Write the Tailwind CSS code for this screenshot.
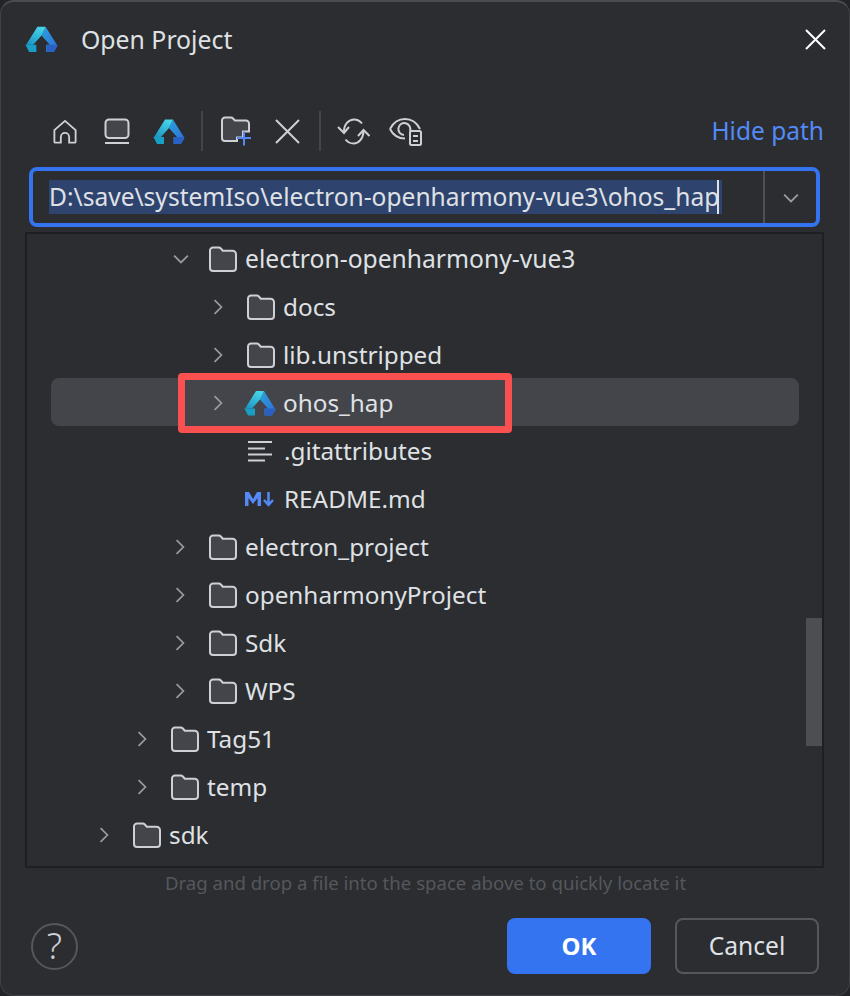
<!doctype html>
<html><head><meta charset="utf-8"><script src="https://cdn.jsdelivr.net/npm/@tailwindcss/browser@4"></script></head>
<body class="m-0 bg-[#232427]">
<svg width="0" height="0" class="absolute">
<defs>
<linearGradient id="g2" x1="0.7" y1="0" x2="0.2" y2="1"><stop offset="0" stop-color="#46d6e8"/><stop offset="1" stop-color="#1c94c4"/></linearGradient>
<linearGradient id="g3" x1="0" y1="0" x2="1" y2="1"><stop offset="0" stop-color="#2aa3dc"/><stop offset="1" stop-color="#2f6bd6"/></linearGradient>
<symbol id="logo" viewBox="0 0 32 26">
<path d="M20 1L31.500 19.500 28 25.500H20.500V18.500H24L16 9.500z" fill="url(#g3)"/>
<path d="M12 1H20L16 9.500 8 18.500H.5L.5 19.500z" fill="url(#g2)"/>
<path d="M.5 18.500H11V25.500H4z" fill="#1b9ec6"/>
<path d="M21 18.500H31L28 25.500H21z" fill="#2a5fc4"/>
</symbol>
<symbol id="folder" viewBox="0 0 28 26">
<path d="M1 4.500A3 3 0 0 1 4 1.500h5.800c.9 0 1.500.4 2.100 1l1.900 2.200h9.700a3.500 3.500 0 0 1 3.500 3.500v13.800a3 3 0 0 1-3 3H4a3 3 0 0 1-3-3z" fill="#43454a" stroke="#ced0d6" stroke-width="2"/>
</symbol>
<symbol id="right" viewBox="0 0 14 20"><path d="M3 2l8 8-8 8" fill="none" stroke="#9a9ca2" stroke-width="2"/></symbol>
<symbol id="down" viewBox="0 0 20 14"><path d="M2 3l8 8 8-8" fill="none" stroke="#9a9ca2" stroke-width="2"/></symbol>
</defs>
</svg>

<div class="relative w-[850px] h-[996px] box-border overflow-hidden rounded-[14px] border border-[#3f4146] border-t-[2px] border-t-[#4b4c50] bg-[#2b2d30] font-['Noto_Sans','Open_Sans',sans-serif] text-[#dfe1e5] flex flex-col">

  <!-- title -->
  <div class="flex items-center h-[74px] pl-[24px] pr-[23px] shrink-0">
    <svg class="w-[33px] h-[28px]"><use href="#logo"/></svg>
    <span class="ml-[23px] text-[24.8px] leading-none">Open Project</span>
    <svg class="ml-auto w-[21px] h-[21px]" viewBox="0 0 21 21"><path d="M1 1l19 19M20 1L1 20" stroke="#fff" stroke-width="2" fill="none"/></svg>
  </div>

  <!-- toolbar -->
  <div class="flex items-center h-[44px] mt-[33px] pl-[51px] pr-[25px] shrink-0">
    <svg class="ml-[1px] w-[24px] h-[25px]" viewBox="0 0 26 26" fill="none" stroke="#ced0d6" stroke-width="2"><path d="M1.500 11.500L13 1.500l11.500 10V24a1 1 0 0 1-1 1H17.500v-6a4.500 4.500 0 0 0-9 0v6H2.500a1 1 0 0 1-1-1z"/></svg>
    <svg class="ml-[27px] w-[26px] h-[26px]" viewBox="0 0 26 26" fill="none" stroke="#ced0d6" stroke-width="2"><rect x="1.500" y="1.500" width="23" height="18.500" rx="3.500" fill="#43454a"/><path d="M1 25h24"/></svg>
    <svg class="ml-[23px] w-[32px] h-[27px]"><use href="#logo"/></svg>
    <div class="ml-[16px] w-[2px] h-[40px] bg-[#43454a]"></div>
    <svg class="ml-[18px] w-[31px] h-[30px]" viewBox="0 0 31 30" fill="none"><path d="M1 4.500A3 3 0 0 1 4 1.500h6c.8 0 1.500.3 2 1l2 2h11a3 3 0 0 1 3 3v8H22v6h-6v3.500H4a3 3 0 0 1-3-3z" fill="#43454a" stroke="#ced0d6" stroke-width="2"/><path d="M16 22h14M23 15.500v14" stroke="#548af7" stroke-width="2"/></svg>
    <svg class="ml-[23px] w-[25px] h-[25px]" viewBox="0 0 25 25" fill="none"><path d="M1 1l23 23M24 1L1 24" stroke="#ced0d6" stroke-width="2"/></svg>
    <div class="ml-[19px] w-[2px] h-[40px] bg-[#43454a]"></div>
    <svg class="ml-[16px] w-[33px] h-[27px]" viewBox="0 0 33 27" fill="none" stroke="#ced0d6" stroke-width="2"><path d="M7 13.500C7 6 12 1.500 17 1.500c3.500 0 6 1.500 8 4"/><path d="M1 9l6 6 5-6"/><path d="M26.500 13c0 7.500-5 12.500-10 12.500-3.500 0-6-1.500-8-4"/><path d="M21 18l5.500-6 6 6"/></svg>
    <svg class="ml-[19px] w-[33px] h-[29px]" viewBox="0 0 33 29" fill="none" stroke="#ced0d6" stroke-width="2"><path d="M1 12C4 6 9 2 16 2s12 4 15 10M1 12c3 6 8 9.500 15 9.500"/><path d="M21 14a6 6 0 1 0-6 4"/><rect x="21" y="14" width="11" height="14" rx="1.500" fill="#2b2d30"/><path d="M24 19h5M24 24h5"/></svg>
    <span class="ml-auto text-[24.5px] leading-none text-[#548af7]">Hide path</span>
  </div>

  <!-- path input -->
  <div class="flex items-stretch h-[60px] mt-[14px] ml-[28px] mr-[29px] rounded-[8px] border-[4px] border-[#3574f0] shrink-0 box-border">
    <div class="flex-1 flex items-center pl-[16px]">
      <span class="inline-block h-[34px] leading-[34px] text-[24.55px] bg-[#2e436e] text-[#dfe1e5] pr-[3px] whitespace-nowrap">D:\save\systemIso\electron-openharmony-vue3\ohos_hap<span class="inline-block w-[2px] h-[34px] -ml-[2px] align-top bg-[#dfe1e5]"></span></span>
    </div>
    <div class="w-[53px] border-l-2 border-[#4e5055] flex items-center justify-center">
      <svg class="w-[18px] h-[12px] mt-[2px]"><use href="#down"/></svg>
    </div>
  </div>

  <!-- tree -->
  <div class="relative mt-[5px] ml-[24px] mr-[25px] h-[636px] shrink-0 border-2 border-[#1e1f22] overflow-hidden pt-[1px] text-[24.3px]">
    <div class="flex items-center h-[48px] pl-[145px] text-[24.65px]"><svg class="w-[18px] h-[12px]"><use href="#down"/></svg><svg class="ml-[19px] w-[28px] h-[26px]"><use href="#folder"/></svg><span class="ml-[8px]">electron-openharmony-vue3</span></div>
    <div class="flex items-center h-[48px] pl-[185px]"><svg class="w-[12px] h-[18px]"><use href="#right"/></svg><svg class="ml-[23px] w-[28px] h-[26px]"><use href="#folder"/></svg><span class="ml-[8px]">docs</span></div>
    <div class="flex items-center h-[48px] pl-[185px]"><svg class="w-[12px] h-[18px]"><use href="#right"/></svg><svg class="ml-[23px] w-[28px] h-[26px]"><use href="#folder"/></svg><span class="ml-[8px]">lib.unstripped</span></div>
    <div class="flex items-center h-[48px] pl-[185px] relative">
      <div class="absolute left-[24px] w-[748px] -top-[1px] h-[48px] rounded-[8px] bg-[#43454a]"></div>
      <svg class="relative w-[12px] h-[18px]"><use href="#right"/></svg><svg class="relative ml-[20px] w-[32px] h-[26px]"><use href="#logo"/></svg><span class="relative ml-[7px]">ohos_hap</span>
    </div>
    <div class="flex items-center h-[48px] pl-[220px]"><svg class="w-[26px] h-[22px]" viewBox="0 0 26 22" fill="none" stroke="#ced0d6" stroke-width="2"><path d="M1 2h24M1 8.500h17M1 14.500h24M1 20.500h17"/></svg><span class="ml-[11px]">.gitattributes</span></div>
    <div class="flex items-center h-[48px] pl-[218px]"><svg class="w-[31px] h-[16px]" viewBox="0 0 31 16" fill="#548af7" stroke="none"><path d="M0 15V1h4l4 7 4-7h4v14h-3.500V7L8 13 3.500 7v8z"/><path d="M23.500 1v12M19 9l4.500 5 4.500-5" fill="none" stroke="#548af7" stroke-width="2.500"/></svg><span class="ml-[8px]">README.md</span></div>
    <div class="flex items-center h-[48px] pl-[147px]"><svg class="w-[12px] h-[18px]"><use href="#right"/></svg><svg class="ml-[23px] w-[28px] h-[26px]"><use href="#folder"/></svg><span class="ml-[8px]">electron_project</span></div>
    <div class="flex items-center h-[48px] pl-[147px]"><svg class="w-[12px] h-[18px]"><use href="#right"/></svg><svg class="ml-[23px] w-[28px] h-[26px]"><use href="#folder"/></svg><span class="ml-[8px]">openharmonyProject</span></div>
    <div class="flex items-center h-[48px] pl-[147px]"><svg class="w-[12px] h-[18px]"><use href="#right"/></svg><svg class="ml-[23px] w-[28px] h-[26px]"><use href="#folder"/></svg><span class="ml-[8px]">Sdk</span></div>
    <div class="flex items-center h-[48px] pl-[147px]"><svg class="w-[12px] h-[18px]"><use href="#right"/></svg><svg class="ml-[23px] w-[28px] h-[26px]"><use href="#folder"/></svg><span class="ml-[8px]">WPS</span></div>
    <div class="flex items-center h-[48px] pl-[109px]"><svg class="w-[12px] h-[18px]"><use href="#right"/></svg><svg class="ml-[23px] w-[28px] h-[26px]"><use href="#folder"/></svg><span class="ml-[8px]">Tag51</span></div>
    <div class="flex items-center h-[48px] pl-[109px]"><svg class="w-[12px] h-[18px]"><use href="#right"/></svg><svg class="ml-[23px] w-[28px] h-[26px]"><use href="#folder"/></svg><span class="ml-[8px]">temp</span></div>
    <div class="flex items-center h-[48px] pl-[71px]"><svg class="w-[12px] h-[18px]"><use href="#right"/></svg><svg class="ml-[23px] w-[28px] h-[26px]"><use href="#folder"/></svg><span class="ml-[8px]">sdk</span></div>
    <!-- scrollbar -->
    <div class="absolute left-[779px] top-[384px] w-[16px] h-[128px] bg-[#4d4e51]"></div>
    <!-- red highlight -->
    <div class="absolute left-[151px] top-[139px] w-[334px] h-[60px] rounded-[4px] border-[7px] border-[#fb5050]"></div>
  </div>

  <!-- hint -->
  <div class="h-[30px] flex items-center justify-center text-[18.6px] text-[#55575c] shrink-0 pl-[1px]">Drag and drop a file into the space above to quickly locate it</div>

  <!-- footer -->
  <div class="flex items-center mt-[20px] pl-[30px] pr-[30px] shrink-0">
    <div class="w-[47px] h-[47px] rounded-full border-2 border-[#55575c] flex items-center justify-center text-[36px] font-light leading-none text-[#ced0d6]">?</div>
    <button class="ml-auto w-[144px] h-[56px] rounded-[8px] bg-[#3574f0] text-white text-[24px] font-bold">OK</button>
    <button class="ml-[24px] w-[144px] h-[56px] rounded-[8px] border-2 border-[#55575c] text-[24.6px] text-[#dfe1e5]">Cancel</button>
  </div>
</div>
</body></html>
